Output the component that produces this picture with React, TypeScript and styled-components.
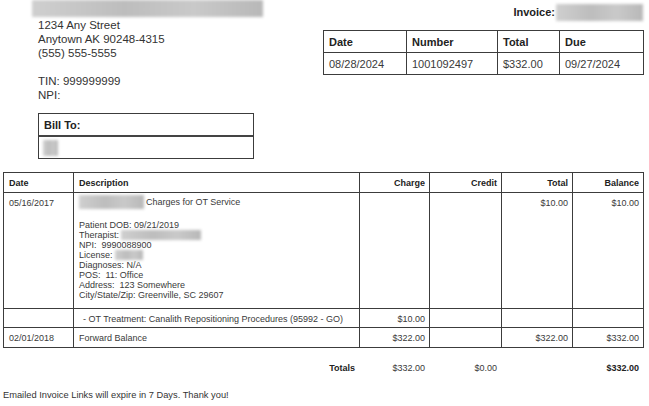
import React, { FC } from 'react';
import styled, { createGlobalStyle } from 'styled-components';

const GlobalStyle = createGlobalStyle`
	html, body {
		margin: 0;
		padding: 0;
		background: #ffffff;
	}
	body {
		font-family: 'Liberation Sans', Arial, sans-serif;
		color: #3a3a3a;
	}
`;

const Page = styled.div`
	width: 649px;
	height: 406px;
	box-sizing: border-box;
	padding: 0 6px 0 3px;
	overflow: hidden;
`;

const Header = styled.div`
	display: flex;
	justify-content: space-between;
	align-items: flex-start;
`;

const Sender = styled.div`
	display: flex;
	flex-direction: column;
	padding-left: 29px;
`;

const Redacted = styled.span<{ $w: number; $h: number }>`
	display: inline-block;
	width: ${(p) => p.$w}px;
	height: ${(p) => p.$h}px;
	background: linear-gradient(90deg, #cfcfcf, #bdbdbd 40%, #c9c9c9 70%, #b8b8b8);
	filter: blur(1.5px);
	vertical-align: middle;
`;

const Address = styled.div`
	margin: 1px 0 0 6px;
	font-size: 11.5px;
	line-height: 14px;
	color: #333;
`;

const Gap = styled.div`
	height: 14px;
`;

const InvoiceBlock = styled.div`
	width: 320px;
	display: flex;
	flex-direction: column;
`;

const InvoiceLine = styled.div`
	height: 24px;
	display: flex;
	justify-content: flex-end;
	align-items: center;
	gap: 1px;
	font-size: 11px;
	font-weight: bold;
	color: #222;
`;

const SummaryTable = styled.table`
	margin-top: 6px;
	width: 320px;
	border-collapse: collapse;
	table-layout: fixed;
	font-size: 11px;

	th, td {
		border: 1px solid #3c3c3c;
		text-align: left;
		padding: 0 5px;
		height: 21px;
	}
	th {
		font-weight: bold;
		color: #222;
	}
	td {
		color: #3a3a3a;
	}
`;

const BillTo = styled.div`
	margin: 11px 0 0 35px;
	width: 214px;
	border: 1px solid #3c3c3c;
`;

const BillToHead = styled.div`
	height: 21px;
	display: flex;
	align-items: center;
	padding-left: 5px;
	font-size: 11px;
	font-weight: bold;
	color: #222;
	border-bottom: 2px solid #444;
`;

const BillToBody = styled.div`
	height: 21px;
	display: flex;
	align-items: center;
	padding-left: 4px;
`;

const Ledger = styled.table`
	margin-top: 13px;
	width: 640px;
	border-collapse: collapse;
	table-layout: fixed;
	font-size: 9px;

	th, td {
		border: 1px solid #3c3c3c;
		padding: 0 4px 0 5px;
	}
	th {
		height: 19px;
		font-weight: bold;
		color: #222;
		text-align: left;
	}
`;

const HeadCell = styled.th<{ $right?: boolean }>`
	&& {
		text-align: ${(p) => (p.$right ? 'right' : 'left')};
	}
`;

const Cell = styled.td<{ $right?: boolean; $indent?: boolean; $h?: number }>`
	&& {
		text-align: ${(p) => (p.$right ? 'right' : 'left')};
		vertical-align: top;
		padding-top: 5px;
		padding-left: ${(p) => (p.$indent ? 9 : 5)}px;
		height: ${(p) => p.$h ?? 14}px;
		line-height: 10px;
		color: #3a3a3a;
	}
`;

const ChargeTitle = styled.div`
	display: flex;
	align-items: center;
	gap: 2px;
	margin-top: -3px;
	line-height: 14px;
`;

const Details = styled.div`
	margin-top: 11px;
	line-height: 10px;
`;

const DetailLine = styled.div`
	display: flex;
	align-items: center;
	height: 10px;
	gap: 2px;
`;

const Totals = styled.div`
	display: grid;
	grid-template-columns: 356px 70px 72px 71px 71px;
	margin-top: 14px;
	font-size: 9px;
	line-height: 12px;
`;

const TotalCell = styled.div<{ $bold?: boolean }>`
	text-align: right;
	padding-right: 4px;
	font-weight: ${(p) => (p.$bold ? 'bold' : 'normal')};
	color: ${(p) => (p.$bold ? '#222' : '#3a3a3a')};
`;

const Footer = styled.div`
	margin-top: 16px;
	font-size: 9.3px;
	color: #333;
`;

const summary = [
	{ label: 'Date', value: '08/28/2024' },
	{ label: 'Number', value: '1001092497' },
	{ label: 'Total', value: '$332.00' },
	{ label: 'Due', value: '09/27/2024' },
];

const summaryWidths = [83, 91, 62, 84];
const ledgerWidths = [70, 286, 70, 72, 71, 71];

const App: FC = () => {
	return (
		<Page>
			<GlobalStyle />
			<Header>
				<Sender>
					<Redacted $w={231} $h={17} />
					<Address>
						<div>1234 Any Street</div>
						<div>Anytown AK 90248-4315</div>
						<div>(555) 555-5555</div>
						<Gap />
						<div>TIN: 999999999</div>
						<div>NPI:</div>
					</Address>
				</Sender>
				<InvoiceBlock>
					<InvoiceLine>
						Invoice: <Redacted $w={87} $h={17} />
					</InvoiceLine>
					<SummaryTable>
						<colgroup>
							{summaryWidths.map((w, i) => (
								<col key={i} style={{ width: w }} />
							))}
						</colgroup>
						<thead>
							<tr>
								{summary.map(({ label }) => (
									<th key={label}>{label}</th>
								))}
							</tr>
						</thead>
						<tbody>
							<tr>
								{summary.map(({ label, value }) => (
									<td key={label}>{value}</td>
								))}
							</tr>
						</tbody>
					</SummaryTable>
				</InvoiceBlock>
			</Header>

			<BillTo>
				<BillToHead>Bill To:</BillToHead>
				<BillToBody>
					<Redacted $w={15} $h={16} />
				</BillToBody>
			</BillTo>

			<Ledger>
				<colgroup>
					{ledgerWidths.map((w, i) => (
						<col key={i} style={{ width: w }} />
					))}
				</colgroup>
				<thead>
					<tr>
						<HeadCell>Date</HeadCell>
						<HeadCell>Description</HeadCell>
						<HeadCell $right>Charge</HeadCell>
						<HeadCell $right>Credit</HeadCell>
						<HeadCell $right>Total</HeadCell>
						<HeadCell $right>Balance</HeadCell>
					</tr>
				</thead>
				<tbody>
					<tr>
						<Cell $h={110}>05/16/2017</Cell>
						<Cell>
							<ChargeTitle>
								<Redacted $w={65} $h={14} />
								<span>Charges for OT Service</span>
							</ChargeTitle>
							<Details>
								<DetailLine>Patient DOB: 09/21/2019</DetailLine>
								<DetailLine>
									Therapist: <Redacted $w={80} $h={10} />
								</DetailLine>
								<DetailLine>NPI:&nbsp; 9990088900</DetailLine>
								<DetailLine>
									License: <Redacted $w={28} $h={10} />
								</DetailLine>
								<DetailLine>Diagnoses: N/A</DetailLine>
								<DetailLine>POS:&nbsp; 11: Office</DetailLine>
								<DetailLine>Address:&nbsp; 123 Somewhere</DetailLine>
								<DetailLine>City/State/Zip: Greenville, SC 29607</DetailLine>
							</Details>
						</Cell>
						<Cell $right />
						<Cell $right />
						<Cell $right>$10.00</Cell>
						<Cell $right>$10.00</Cell>
					</tr>
					<tr>
						<Cell $h={13} />
						<Cell $h={13} $indent>
							- OT Treatment: Canalith Repositioning Procedures (95992 - GO)
						</Cell>
						<Cell $h={13} $right>$10.00</Cell>
						<Cell $h={13} $right />
						<Cell $h={13} $right />
						<Cell $h={13} $right />
					</tr>
					<tr>
						<Cell>02/01/2018</Cell>
						<Cell>Forward Balance</Cell>
						<Cell $right>$322.00</Cell>
						<Cell $right />
						<Cell $right>$322.00</Cell>
						<Cell $right>$332.00</Cell>
					</tr>
				</tbody>
			</Ledger>

			<Totals>
				<TotalCell $bold>Totals</TotalCell>
				<TotalCell>$332.00</TotalCell>
				<TotalCell>$0.00</TotalCell>
				<TotalCell />
				<TotalCell $bold>$332.00</TotalCell>
			</Totals>

			<Footer>Emailed Invoice Links will expire in 7 Days. Thank you!</Footer>
		</Page>
	);
};

export default App;
